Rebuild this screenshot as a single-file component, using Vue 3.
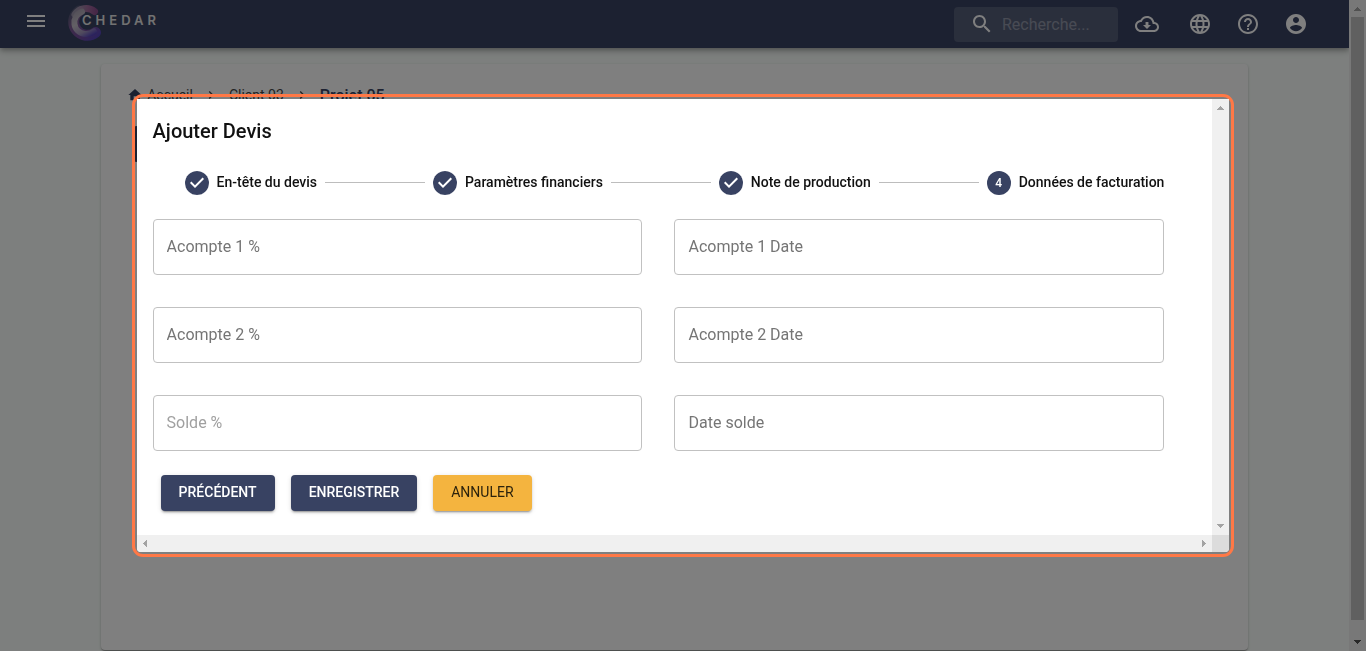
<script setup>
import { ref } from 'vue'

const steps = [
  { label: 'En-tête du devis', done: true },
  { label: 'Paramètres financiers', done: true },
  { label: 'Note de production', done: true },
  { label: 'Données de facturation', done: false }
]

const fields = ref([
  { label: 'Acompte 1 %', value: '' },
  { label: 'Acompte 1 Date', value: '' },
  { label: 'Acompte 2 %', value: '' },
  { label: 'Acompte 2 Date', value: '' },
  { label: 'Solde %', value: '', disabled: true },
  { label: 'Date solde', value: '' }
])

const actions = [
  { label: 'Téléchargements', path: 'M19.35 10.04C18.67 6.59 15.64 4 12 4 9.11 4 6.6 5.64 5.35 8.04 2.34 8.36 0 10.91 0 14c0 3.31 2.69 6 6 6h13c2.76 0 5-2.24 5-5 0-2.64-2.05-4.78-4.65-4.96zM19 18H6c-2.21 0-4-1.79-4-4 0-2.05 1.53-3.76 3.56-3.97l1.07-.11.5-.95C8.08 7.14 9.94 6 12 6c2.62 0 4.88 1.86 5.39 4.43l.3 1.5 1.53.11c1.56.1 2.78 1.41 2.78 2.96 0 1.65-1.35 3-3 3zm-5.55-8h-2.9v3H8l4 4 4-4h-2.55z' },
  { label: 'Langue', path: 'M11.99 2C6.47 2 2 6.48 2 12s4.47 10 9.99 10C17.52 22 22 17.52 22 12S17.52 2 11.99 2zm6.93 6h-2.95c-.32-1.25-.78-2.45-1.38-3.56 1.84.63 3.37 1.91 4.33 3.56zM12 4.04c.83 1.2 1.48 2.53 1.91 3.96h-3.82c.43-1.43 1.08-2.76 1.91-3.96zM4.26 14C4.1 13.36 4 12.69 4 12s.1-1.36.26-2h3.38c-.08.66-.14 1.32-.14 2s.06 1.34.14 2H4.26zm.82 2h2.95c.32 1.25.78 2.45 1.38 3.56-1.84-.63-3.37-1.9-4.33-3.56zm2.95-8H5.08c.96-1.66 2.49-2.93 4.33-3.56C8.81 5.55 8.35 6.75 8.03 8zM12 19.96c-.83-1.2-1.48-2.53-1.91-3.96h3.82c-.43 1.43-1.08 2.76-1.91 3.96zM14.34 14H9.66c-.09-.66-.16-1.32-.16-2s.07-1.35.16-2h4.68c.09.65.16 1.32.16 2s-.07 1.34-.16 2zm.25 5.56c.6-1.11 1.06-2.31 1.38-3.56h2.95c-.96 1.65-2.49 2.93-4.33 3.56zM16.36 14c.08-.66.14-1.32.14-2s-.06-1.34-.14-2h3.38c.16.64.26 1.31.26 2s-.1 1.36-.26 2h-3.38z' },
  { label: 'Aide', path: 'M11 18h2v-2h-2v2zm1-16C6.48 2 2 6.48 2 12s4.48 10 10 10 10-4.48 10-10S17.52 2 12 2zm0 18c-4.41 0-8-3.59-8-8s3.59-8 8-8 8 3.59 8 8-3.59 8-8 8zm0-14c-2.21 0-4 1.79-4 4h2c0-1.1.9-2 2-2s2 .9 2 2c0 2-3 1.75-3 5h2c0-2.25 3-2.5 3-5 0-2.21-1.79-4-4-4z' },
  { label: 'Compte', path: 'M12 2C6.48 2 2 6.48 2 12s4.48 10 10 10 10-4.48 10-10S17.52 2 12 2zm0 3c1.66 0 3 1.34 3 3s-1.34 3-3 3-3-1.34-3-3 1.34-3 3-3zm0 14.2c-2.5 0-4.71-1.28-6-3.22.03-1.99 4-3.08 6-3.08 1.99 0 5.97 1.09 6 3.08-1.29 1.94-3.5 3.22-6 3.22z' }
]
</script>

<template>
  <div class="screen">
    <div class="page">
      <header class="topbar">
        <button class="menu" type="button" aria-label="Menu">
          <svg viewBox="0 0 24 24"><path d="M3 18h18v-2H3v2zm0-5h18v-2H3v2zm0-7v2h18V6H3z" /></svg>
        </button>
        <a class="brand" href="#">
          <svg class="mark" viewBox="0 0 40 40" aria-hidden="true">
            <defs>
              <linearGradient id="outer" gradientUnits="userSpaceOnUse" x1="6" y1="4" x2="32" y2="34">
                <stop offset="0" stop-color="#6d7087" stop-opacity="0.3" />
                <stop offset="0.35" stop-color="#7d5a94" />
                <stop offset="0.7" stop-color="#754c9e" />
                <stop offset="1" stop-color="#5444bd" />
              </linearGradient>
              <linearGradient id="arm" gradientUnits="userSpaceOnUse" x1="10" y1="6" x2="31" y2="8">
                <stop offset="0" stop-color="#b8b0c0" stop-opacity="0.7" />
                <stop offset="0.6" stop-color="#a06a9c" />
                <stop offset="1" stop-color="#8d4f8e" />
              </linearGradient>
              <linearGradient id="inner" gradientUnits="userSpaceOnUse" x1="14" y1="6" x2="28" y2="31">
                <stop offset="0" stop-color="#a9a2b2" />
                <stop offset="0.4" stop-color="#c6c0ca" />
                <stop offset="0.75" stop-color="#a094bc" />
                <stop offset="1" stop-color="#5444bd" />
              </linearGradient>
            </defs>
            <path d="M14 7A13.500 13.500 0 1 0 30.500 28.500" fill="none" stroke="url(#outer)" stroke-width="11" stroke-linecap="round" />
            <path d="M10 10.500A13.500 13.500 0 0 1 29.500 7.500" fill="none" stroke="url(#arm)" stroke-width="7" stroke-linecap="round" />
            <path d="M17 7.700A11.500 11.500 0 0 0 20 30Q25 30.500 29 27.500" fill="none" stroke="url(#inner)" stroke-width="6" stroke-linecap="round" />
          </svg>
          <span class="name">CHEDAR</span>
        </a>
        <label class="search">
          <svg viewBox="0 0 24 24" aria-hidden="true"><path d="M15.5 14h-.79l-.28-.27C15.41 12.59 16 11.11 16 9.5 16 5.91 13.09 3 9.5 3S3 5.91 3 9.5 5.91 16 9.5 16c1.61 0 3.09-.59 4.23-1.57l.27.28v.79l5 4.99L20.49 19l-4.99-5zm-6 0C7.01 14 5 11.99 5 9.5S7.01 5 9.5 5 14 7.01 14 9.5 11.99 14 9.5 14z" /></svg>
          <input type="search" placeholder="Recherche..." aria-label="Recherche" />
        </label>
        <button v-for="a in actions" :key="a.label" class="action" type="button" :aria-label="a.label">
          <svg viewBox="0 0 24 24"><path :d="a.path" /></svg>
        </button>
      </header>

      <main class="main">
        <section class="card">
          <nav class="crumbs" aria-label="Fil d'Ariane">
            <a href="#" class="home">
              <svg viewBox="0 0 24 24" aria-hidden="true"><path d="M10 20v-6h4v6h5v-8h3L12 3 2 12h3v8z" /></svg>
              Accueil
            </a>
            <svg class="chevron" viewBox="0 0 24 24" aria-hidden="true"><path d="M10 6 8.59 7.41 13.17 12l-4.58 4.59L10 18l6-6z" /></svg>
            <a href="#">Client 03</a>
            <svg class="chevron" viewBox="0 0 24 24" aria-hidden="true"><path d="M10 6 8.59 7.41 13.17 12l-4.58 4.59L10 18l6-6z" /></svg>
            <strong>Projet 05</strong>
          </nav>
          <div class="panel"></div>
        </section>
      </main>
    </div>

    <div class="page-scroll" aria-hidden="true">
      <svg viewBox="0 0 17 17" shape-rendering="crispEdges"><path class="faint" d="M5 11h7L8.500 7z" /></svg>
      <div class="thumb"></div>
      <svg viewBox="0 0 17 17" shape-rendering="crispEdges"><path class="strong" d="M5 6h7L8.500 10z" /></svg>
    </div>

    <div class="backdrop">
      <div class="ring">
        <div class="dialog" role="dialog" aria-modal="true" aria-labelledby="dialog-title">
          <form class="content" @submit.prevent>
            <h2 id="dialog-title">Ajouter Devis</h2>
            <ol class="stepper">
              <li v-for="(s, i) in steps" :key="s.label">
                <span class="bullet">
                  <svg v-if="s.done" viewBox="0 0 24 24" aria-hidden="true"><path d="M12 0a12 12 0 1 0 0 24 12 12 0 0 0 0-24zm-2 17-5-5 1.400-1.400 3.600 3.600 7.600-7.600L19 8l-9 9z" /></svg>
                  <template v-else>{{ i + 1 }}</template>
                </span>
                <span class="step-label">{{ s.label }}</span>
              </li>
            </ol>
            <div class="fields">
              <input
                v-for="f in fields"
                :key="f.label"
                v-model="f.value"
                type="text"
                :placeholder="f.label"
                :aria-label="f.label"
                :disabled="f.disabled"
              />
            </div>
            <div class="buttons">
              <button type="button">PRÉCÉDENT</button>
              <button type="submit">ENREGISTRER</button>
              <button type="button" class="cancel">ANNULER</button>
            </div>
          </form>
          <div class="vbar" aria-hidden="true">
            <svg viewBox="0 0 17 17" shape-rendering="crispEdges"><path d="M5 11h7L8.500 7z" /></svg>
            <svg viewBox="0 0 17 17" shape-rendering="crispEdges"><path d="M5 6h7L8.500 10z" /></svg>
          </div>
          <div class="hbar" aria-hidden="true">
            <svg viewBox="0 0 17 17" shape-rendering="crispEdges"><path d="M10 5v7L6 8.500z" /></svg>
            <svg viewBox="0 0 17 17" shape-rendering="crispEdges"><path d="M7 5v7l4-3.500z" /></svg>
          </div>
          <div class="corner"></div>
        </div>
      </div>
    </div>
  </div>
</template>

<style>
body {
  margin: 0;
  font-family: Roboto, "Liberation Sans", sans-serif;
}
</style>

<style scoped>
* {
  box-sizing: border-box;
}
.screen {
  display: flex;
  min-height: 100vh;
  color: #111;
}
button,
input {
  font: inherit;
}
button {
  border: 0;
  padding: 0;
  cursor: pointer;
}
svg {
  display: block;
  fill: currentColor;
}
.page {
  flex: 1;
  display: flex;
  flex-direction: column;
  background: #fafffc;
}
.topbar {
  display: flex;
  align-items: center;
  height: 48px;
  padding: 0 29px 0 24px;
  color: #fff;
  background: #384262;
  box-shadow: 0 2px 4px -1px rgba(0, 0, 0, 0.2), 0 4px 5px rgba(0, 0, 0, 0.14), 0 1px 10px rgba(0, 0, 0, 0.12);
}
.menu,
.action {
  color: inherit;
  background: none;
}
.menu {
  margin-bottom: 6px;
}
.menu svg,
.action svg,
.search svg {
  width: 24px;
  height: 24px;
}
.brand {
  position: relative;
  margin-left: 17px;
  margin-right: auto;
  color: #e4e4e4;
  text-decoration: none;
}
.mark {
  width: 40px;
  height: 40px;
}
.name {
  position: absolute;
  left: 17px;
  top: 8px;
  font: 600 13px/16px Inter, sans-serif;
  letter-spacing: 4px;
}
.search {
  display: flex;
  align-items: center;
  width: 164px;
  height: 35px;
  margin-right: 5px;
  padding-left: 16px;
  border-radius: 4px;
  background: rgba(255, 255, 255, 0.15);
}
.search input {
  flex: 1;
  min-width: 0;
  margin-left: 8px;
  padding: 0;
  border: 0;
  outline: 0;
  color: inherit;
  background: none;
  font-size: 16px;
}
.search input::placeholder {
  color: #fff;
  opacity: 0.35;
}
.action {
  padding: 12px;
}
.search + .action {
  margin-right: 5px;
}
.main {
  flex: 1;
  display: flex;
  justify-content: center;
  padding: 16px 0 1px;
}
.card {
  width: 85%;
  padding: 19px 28px;
  border-radius: 4px;
  background: #fff;
  box-shadow: 0 2px 1px -1px rgba(0, 0, 0, 0.2), 0 1px 1px rgba(0, 0, 0, 0.14), 0 1px 3px rgba(0, 0, 0, 0.2);
}
.crumbs {
  display: flex;
  align-items: center;
  height: 24px;
  font-size: 14px;
  color: #384262;
}
.crumbs a {
  color: #444;
  text-decoration: none;
}
.crumbs .home {
  display: flex;
  align-items: center;
  gap: 4px;
}
.home svg {
  width: 16px;
  height: 16px;
  margin-left: -2px;
  color: #384262;
}
.crumbs strong {
  font-size: 16px;
  font-weight: 500;
}
.chevron {
  width: 16px;
  height: 16px;
  margin: 0 10px;
  color: #444;
}
.panel {
  height: 36px;
  margin: 19px 4px 0;
  border-radius: 4px;
  background: #384262;
}
.page-scroll {
  display: flex;
  flex-direction: column;
  width: 17px;
  padding: 0 2px;
  background: #f1f1f1;
}
.page-scroll svg {
  width: 17px;
  height: 17px;
  margin: 0 -2px;
}
.thumb {
  flex: 1;
  margin-bottom: 14px;
  background: #c1c1c1;
}
.faint {
  fill: #a3a3a3;
}
.strong {
  fill: #505050;
}
.backdrop {
  position: fixed;
  inset: 0;
  display: grid;
  place-items: center;
  background: rgba(0, 0, 0, 0.5);
}
.ring {
  width: calc(80% + 10px);
  padding: 2px;
  border: 3px solid #ff7846;
  border-radius: 11px;
}
.dialog {
  display: grid;
  grid-template-columns: 1fr 17px;
  grid-template-rows: auto 17px;
  overflow: hidden;
  border-radius: 0 0 4px 4px;
  background: #fff;
}
.content {
  padding: 16px 48px 24px 16px;
}
h2 {
  margin: 0;
  font-size: 20px;
  line-height: 32px;
  font-weight: 500;
}
.stepper {
  display: flex;
  align-items: center;
  margin: 0;
  padding: 24px 0 24px 32px;
  list-style: none;
  font-size: 14px;
  line-height: 24px;
  font-weight: 500;
}
.stepper li {
  display: flex;
  align-items: center;
  gap: 8px;
  white-space: nowrap;
}
.stepper li:not(:last-child) {
  flex: 1 1 auto;
}
.stepper li:not(:last-child)::after {
  content: "";
  flex: 1;
  height: 1px;
  margin: 0 8px 2px 0;
  background: #bdbdbd;
}
.step-label {
  line-height: 22px;
  padding-bottom: 2px;
}
.bullet {
  width: 24px;
  height: 24px;
  border-radius: 50%;
  color: #fff;
  background: #384262;
  font-size: 12px;
  text-align: center;
}
.bullet svg {
  color: #384262;
  background: #fff;
  border-radius: 50%;
}
.fields {
  display: grid;
  grid-template-columns: 1fr 1fr;
  gap: 32px;
}
.fields input {
  min-width: 0;
  height: 56px;
  padding: 0 13px 2px;
  border: 1px solid #c1c1c1;
  border-radius: 4px;
  background: #fff;
  color: #111;
  font-size: 16px;
}
.fields input::placeholder {
  color: #757575;
  opacity: 1;
}
.fields input:disabled::placeholder {
  color: #a0a0a0;
}
.buttons {
  display: flex;
  gap: 16px;
  padding: 24px 8px 0;
}
.buttons button {
  height: 36px;
  padding: 0 18px 2px;
  border-radius: 4px;
  color: #fff;
  background: #384262;
  font-size: 14px;
  font-weight: 500;
  box-shadow: 0 3px 1px -2px rgba(0, 0, 0, 0.2), 0 2px 2px rgba(0, 0, 0, 0.14), 0 1px 5px rgba(0, 0, 0, 0.12);
}
.buttons .cancel {
  color: #2b220c;
  background: #f4b43f;
  font-weight: 400;
}
.vbar,
.hbar {
  display: flex;
  justify-content: space-between;
  color: #a3a3a3;
  background: #f0f0f0;
}
.vbar {
  flex-direction: column;
}
.vbar svg,
.hbar svg {
  width: 17px;
  height: 17px;
}
.corner {
  background: #dcdcdc;
}
</style>
